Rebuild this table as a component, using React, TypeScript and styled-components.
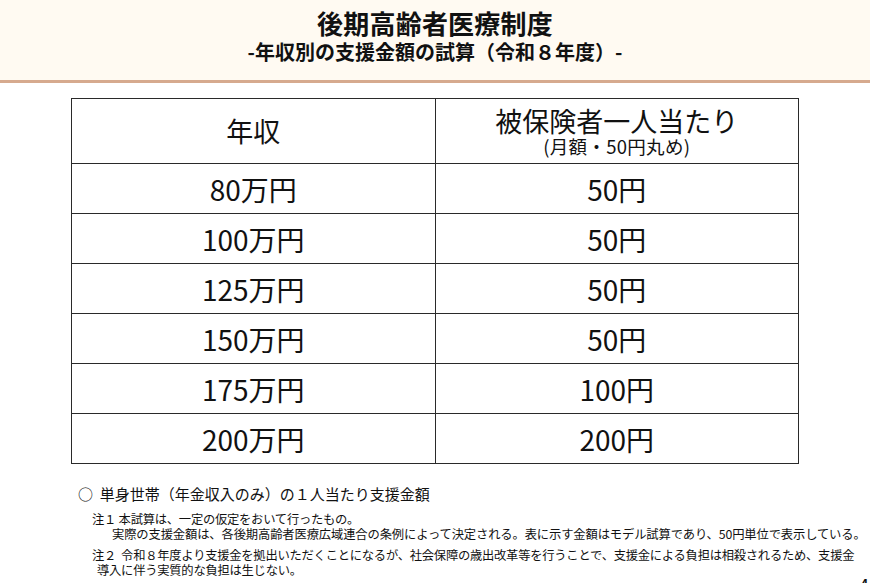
import React from "react";
import styled, { createGlobalStyle } from "styled-components";

const GlobalStyle = createGlobalStyle`
  html, body { margin: 0; padding: 0; background: #ffffff; }
  body { font-family: "Noto Sans CJK JP", "Noto Sans", sans-serif; color: #111; }
`;

const Page = styled.div`
  position: relative;
  width: 870px;
  height: 583px;
  overflow: hidden;
  background: #ffffff;
`;

const Header = styled.header`
  height: 80px;
  background: #fffaf2;
  display: flex;
  flex-direction: column;
  align-items: center;
  padding-top: 6px;
  box-sizing: border-box;
`;

const Title = styled.h1`
  margin: 0;
  font-size: 26px;
  line-height: 34px;
  font-weight: 700;
  letter-spacing: 0.2px;
`;

const Subtitle = styled.h2`
  margin: 0;
  font-size: 20px;
  line-height: 24px;
  font-weight: 700;
`;

const Rule = styled.div`
  height: 3px;
  background: #d6aa8e;
`;

const Table = styled.table`
  margin: 15px 0 0 71px;
  width: 728px;
  border-collapse: collapse;
  table-layout: fixed;
`;

const Cell = styled.td<{ $head?: boolean }>`
  border: 1.5px solid #2a2a2a;
  height: ${(p) => (p.$head ? "64px" : "49px")};
  padding: 0;
  text-align: center;
  vertical-align: middle;
  font-size: ${(p) => (p.$head ? "27px" : "28px")};
  line-height: 30px;
  font-weight: 400;
  letter-spacing: 0;
`;

const SubNote = styled.div`
  font-size: 18.5px;
  line-height: 20px;
  letter-spacing: 0.3px;
`;

const Notes = styled.section`
  padding: 20px 0 0 78px;
`;

const Lead = styled.p`
  margin: 0 0 8px;
  font-size: 15px;
  line-height: 20px;
`;

const Note = styled.p<{ $indent: number }>`
  margin: 0 0 6px 14px;
  font-size: 12.3px;
  line-height: 15px;
  letter-spacing: -0.25px;
  white-space: nowrap;
  & > span {
    display: block;
    padding-left: ${(p) => p.$indent}px;
  }
`;

const Wide = styled.span`
  && {
    display: block;
    letter-spacing: -0.13px;
  }
`;

const PageNo = styled.div`
  position: absolute;
  right: 2px;
  bottom: -8px;
  font-size: 12px;
  font-weight: 700;
`;

const rows: [string, string][] = [
  ["80万円", "50円"],
  ["100万円", "50円"],
  ["125万円", "50円"],
  ["150万円", "50円"],
  ["175万円", "100円"],
  ["200万円", "200円"],
];

export default function App() {
  return (
    <Page>
      <GlobalStyle />
      <Header>
        <Title>後期高齢者医療制度</Title>
        <Subtitle>-年収別の支援金額の試算（令和８年度）-</Subtitle>
      </Header>
      <Rule />
      <Table>
        <tbody>
          <tr>
            <Cell $head>年収</Cell>
            <Cell $head>
              被保険者一人当たり
              <SubNote>(月額・50円丸め)</SubNote>
            </Cell>
          </tr>
          {rows.map(([a, b]) => (
            <tr key={a}>
              <Cell>{a}</Cell>
              <Cell>{b}</Cell>
            </tr>
          ))}
        </tbody>
      </Table>
      <Notes>
        <Lead>○&nbsp;&nbsp;単身世帯（年金収入のみ）の１人当たり支援金額</Lead>
        <Note $indent={20}>
          注１ 本試算は、一定の仮定をおいて行ったもの。
          <Wide>
            実際の支援金額は、各後期高齢者医療広域連合の条例によって決定される。表に示す金額はモデル試算であり、50円単位で表示している。
          </Wide>
        </Note>
        <Note $indent={5}>
          注２&nbsp;&nbsp;令和８年度より支援金を拠出いただくことになるが、社会保障の歳出改革等を行うことで、支援金による負担は相殺されるため、支援金
          <span>導入に伴う実質的な負担は生じない。</span>
        </Note>
      </Notes>
      <PageNo>4</PageNo>
    </Page>
  );
}
